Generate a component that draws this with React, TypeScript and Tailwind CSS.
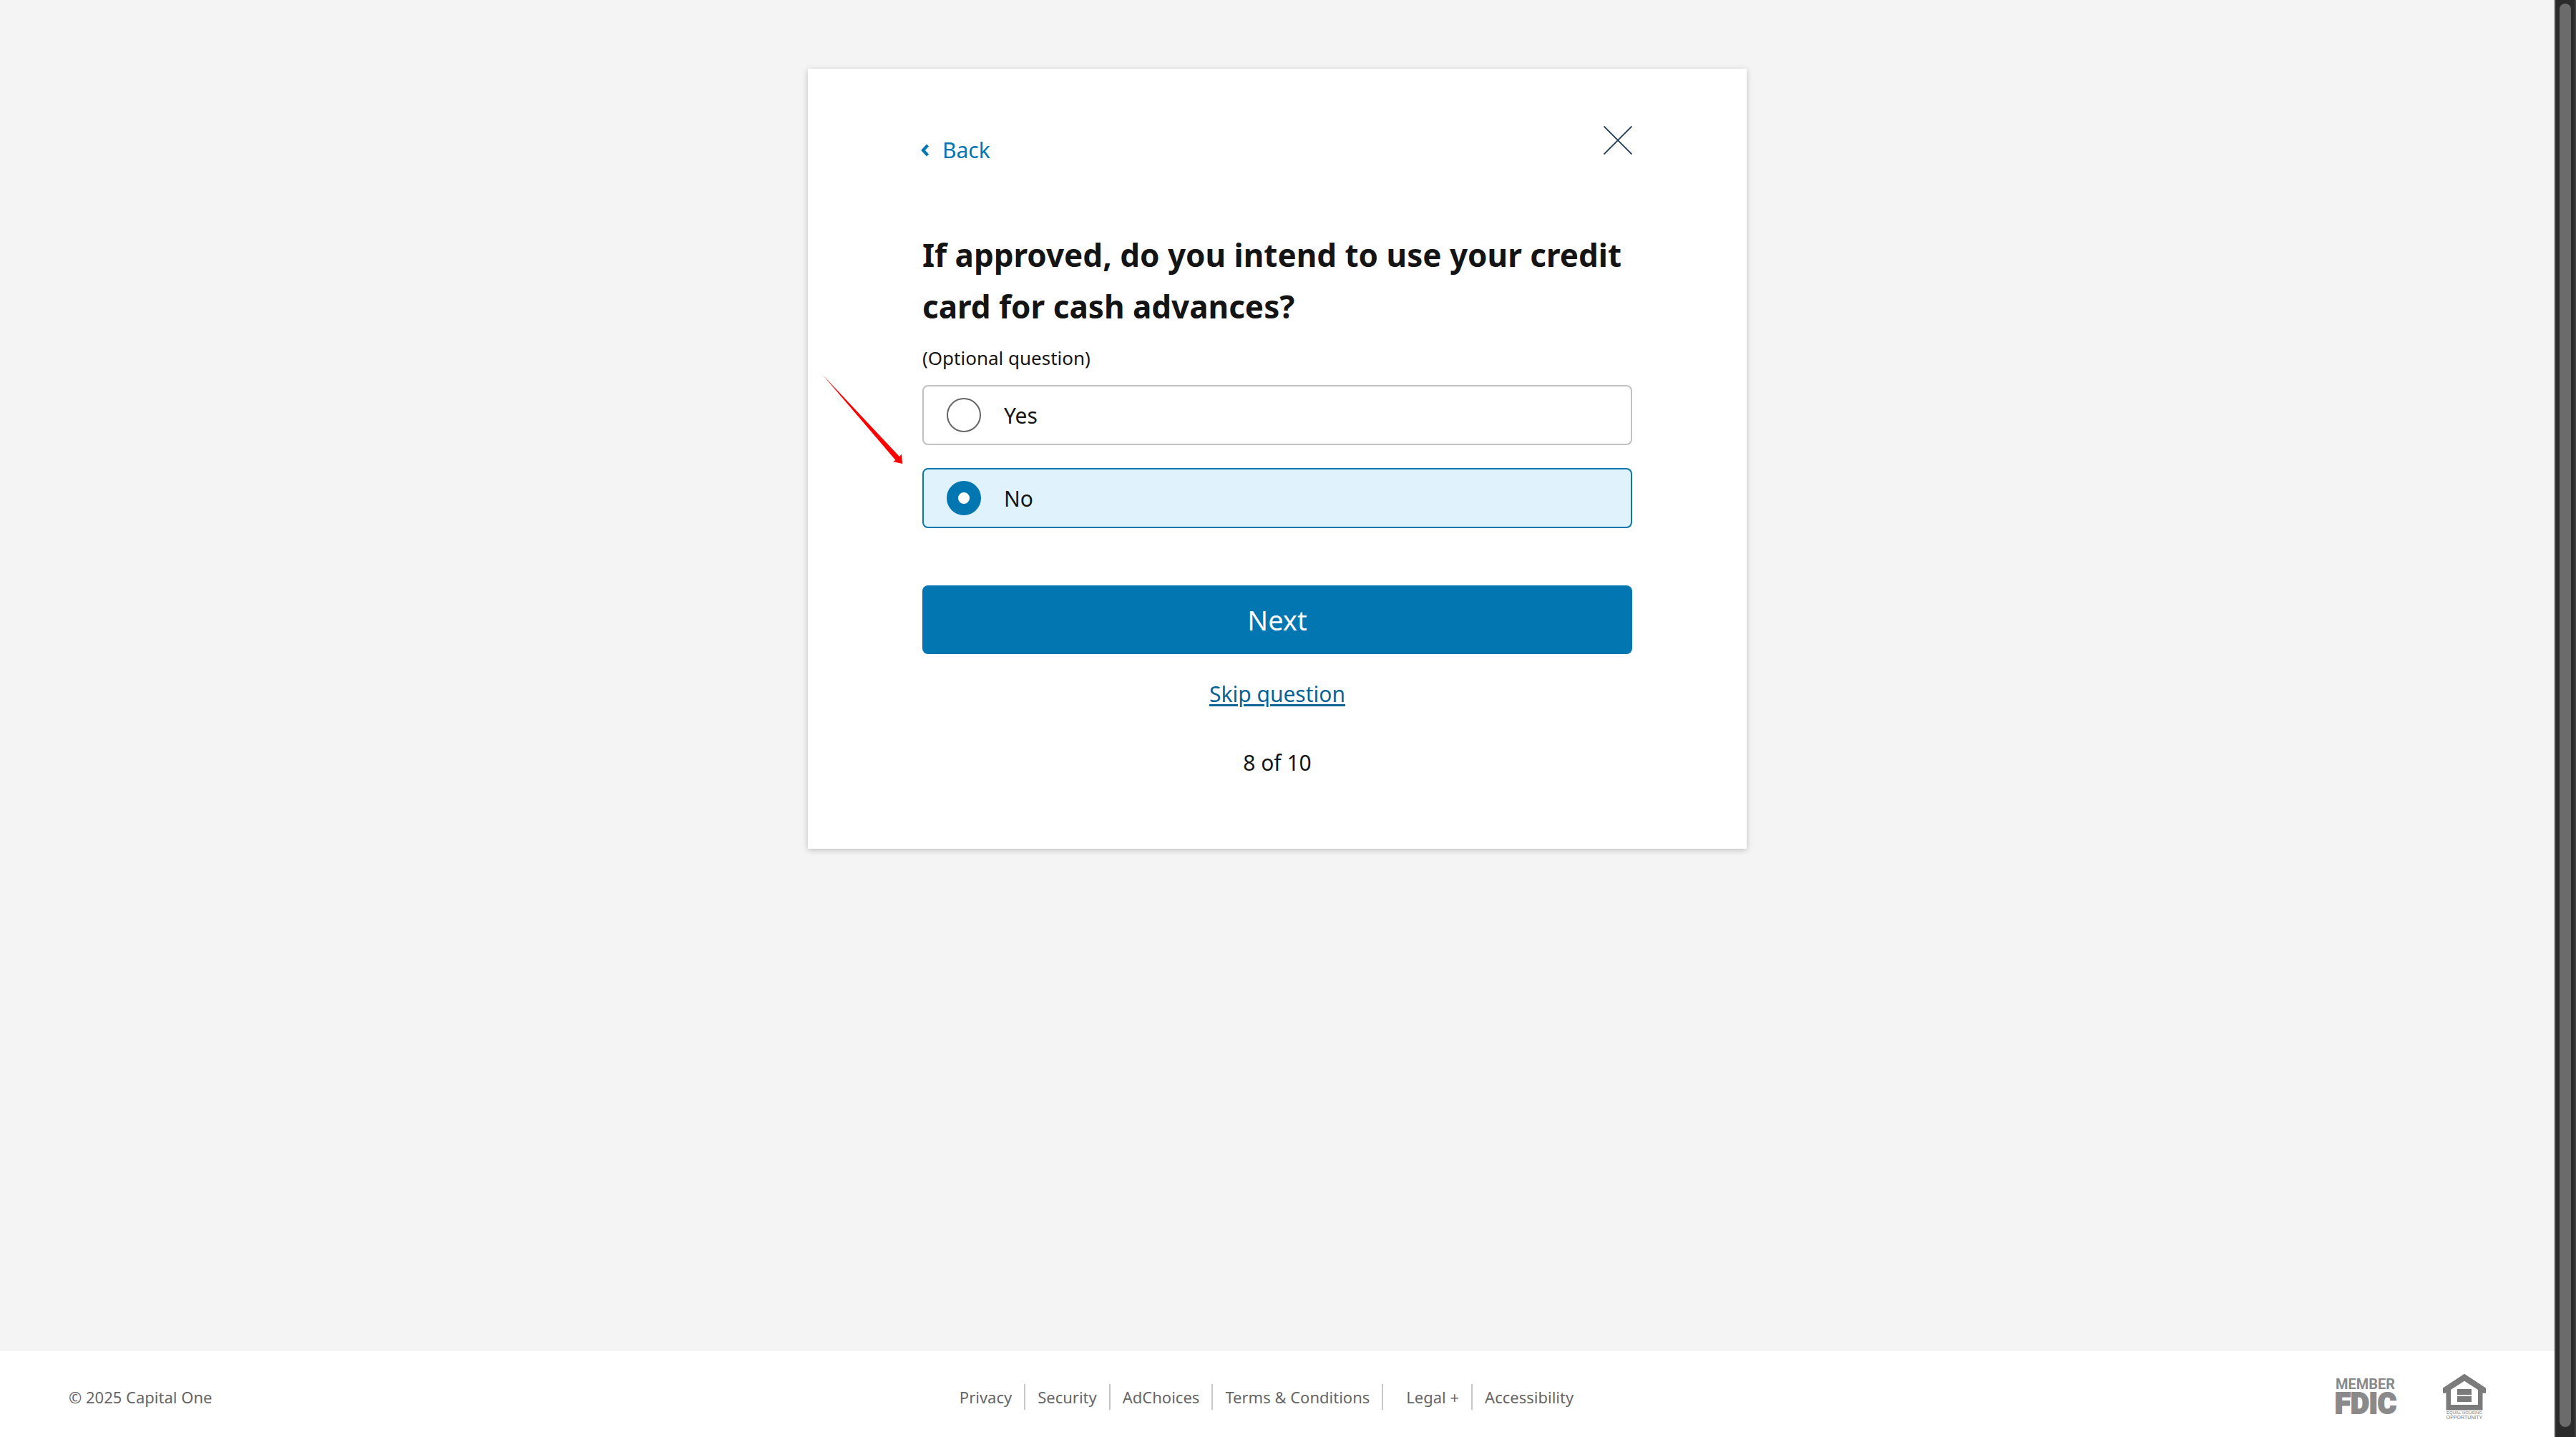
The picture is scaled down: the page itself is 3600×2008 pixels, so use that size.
import React, { useState } from "react";

const footerLinks = [
  { label: "Privacy" },
  { label: "Security" },
  { label: "AdChoices" },
  { label: "Terms & Conditions" },
  { label: "Legal +", spaced: true },
  { label: "Accessibility" },
];

function ChevronLeft() {
  return (
    <svg width="12" height="18" viewBox="0 0 12 18" fill="none" className="overflow-visible" aria-hidden="true">
      <path d="M7.500 2 1 9l6.500 7" stroke="currentColor" strokeWidth="4.2" />
    </svg>
  );
}

function CloseIcon() {
  return (
    <svg width="40" height="40" viewBox="0 0 40 40" fill="none" aria-hidden="true">
      <path d="M.5.5l39 39M39.5.5l-39 39" stroke="currentColor" strokeWidth="1.8" />
    </svg>
  );
}

function PointerArrow() {
  return (
    <svg
      className="pointer-events-none absolute top-[427px] left-5"
      width="112"
      height="126"
      viewBox="0 0 112 126"
      aria-hidden="true"
    >
      <path d="M0 0 108 115 111 111.500 112 125 99 122 102.500 120Z" fill="#fe0000" />
    </svg>
  );
}

function FdicLogo() {
  return (
    <svg
      width="86"
      height="54"
      viewBox="0 0 86 54"
      role="img"
      aria-label="Member FDIC"
      fill="#8a8a8a"
      className="overflow-visible"
    >
      <text x="0" y="16" fontFamily="Roboto, sans-serif" fontWeight="700" fontSize="20">
        MEMBER
      </text>
      <text
        x="-1"
        y="50"
        fontFamily="Roboto, sans-serif"
        fontWeight="900"
        fontSize="40"
        stroke="#8a8a8a"
        strokeWidth="2"
      >
        FDIC
      </text>
    </svg>
  );
}

function EqualHousingLogo() {
  return (
    <svg
      width="60"
      height="66"
      viewBox="0 0 60 66"
      role="img"
      aria-label="Equal Housing Opportunity"
      fill="#7b7b7b"
      className="overflow-visible"
    >
      <path
        fillRule="evenodd"
        d="M30 .7 60 20.5v7.3h-4.5v23.7h-51V27.800H0v-7.3ZM30 10.700 11 23v21h38V23Z"
      />
      <path d="M20 22h20v8H20zM20 32h20v8H20z" />
      <text x="30" y="57" textAnchor="middle" fontFamily="'Liberation Sans', sans-serif" fontSize="6">
        EQUAL HOUSING
      </text>
      <text x="30" y="64" textAnchor="middle" fontFamily="'Liberation Sans', sans-serif" fontSize="7">
        OPPORTUNITY
      </text>
    </svg>
  );
}

type OptionProps = {
  label: string;
  checked: boolean;
  onSelect: () => void;
};

function Option({ label, checked, onSelect }: OptionProps) {
  return (
    <label
      className={
        checked
          ? "flex h-[84px] cursor-pointer items-center gap-8 rounded-lg border-2 border-[#0c77ab] bg-[#e0f3fc] px-8 text-[30px]"
          : "flex h-[84px] cursor-pointer items-center gap-8 rounded-lg border-2 border-[#c1c1c1] bg-white px-8 text-[30px]"
      }
    >
      <input
        type="radio"
        name="cash-advances"
        checked={checked}
        onChange={onSelect}
        className="size-12 shrink-0 appearance-none rounded-full border-2 border-[#666666] bg-white checked:border-16 checked:border-[#0276b1]"
      />
      {label}
    </label>
  );
}

export default function App() {
  const [answer, setAnswer] = useState("No");

  return (
    <div className="flex min-h-screen bg-[#f4f4f4] font-['Noto_Sans',sans-serif] text-[#141414]">
      <div className="flex flex-1 flex-col">
        <main className="flex flex-1 flex-col items-center pt-24">
          <form
            className="relative w-full max-w-[1312px] bg-white px-40 pt-20 pb-24 shadow-[0_2px_8px_rgba(0,0,0,0.22)]"
            onSubmit={(e) => e.preventDefault()}
          >
            <PointerArrow />
            <div className="flex items-start justify-between">
              <button type="button" className="mt-[10px] flex items-center gap-4 text-[30px] leading-[48px] text-[#0276b1]">
                <ChevronLeft />
                Back
              </button>
              <button type="button" aria-label="Close" className="text-[#1b3a57]">
                <CloseIcon />
              </button>
            </div>

            <h1 className="mt-[86px] text-[44px] leading-[72px] font-bold">
              If approved, do you intend to use your credit card for cash advances?
            </h1>
            <p className="mt-[18px] text-[26px] leading-9">(Optional question)</p>

            <div className="mt-5 flex flex-col gap-8">
              {["Yes", "No"].map((label) => (
                <Option key={label} label={label} checked={answer === label} onSelect={() => setAnswer(label)} />
              ))}
            </div>

            <button type="submit" className="mt-20 h-24 w-full rounded-lg bg-[#0276b1] text-[38px] text-white">
              Next
            </button>

            <div className="mt-8 text-center text-[30px] leading-[48px]">
              <a href="#" className="text-[#0a6394] underline decoration-3 underline-offset-3">
                Skip question
              </a>
              <p className="mt-12">8 of 10</p>
            </div>
          </form>
        </main>

        <footer className="grid h-[120px] grid-cols-[1fr_auto_1fr] items-center bg-white px-24 pt-2 text-[22px] text-[#666666]">
          <p>© 2025 Capital One</p>
          <nav aria-label="Footer" className="pr-[30px]">
            <ul className="flex">
              {footerLinks.map(({ label, spaced }) => (
                <li
                  key={label}
                  className={
                    spaced
                      ? "border-r-2 border-[#c8c8c8] pr-[17px] pl-8 leading-9"
                      : "border-r-2 border-[#c8c8c8] px-[17px] leading-9 last:border-r-0"
                  }
                >
                  <a href="#">{label}</a>
                </li>
              ))}
            </ul>
          </nav>
          <div className="flex items-center justify-end gap-16">
            <FdicLogo />
            <EqualHousingLogo />
          </div>
        </footer>
      </div>

      <div
        className="flex w-[30px] shrink-0 flex-col items-center border-x-2 border-[#414141] bg-[#2b2b2b] pt-[5px] pb-[14px]"
        aria-hidden="true"
      >
        <div className="w-4 flex-1 rounded-full bg-[#6b6b6b]" />
      </div>
    </div>
  );
}
